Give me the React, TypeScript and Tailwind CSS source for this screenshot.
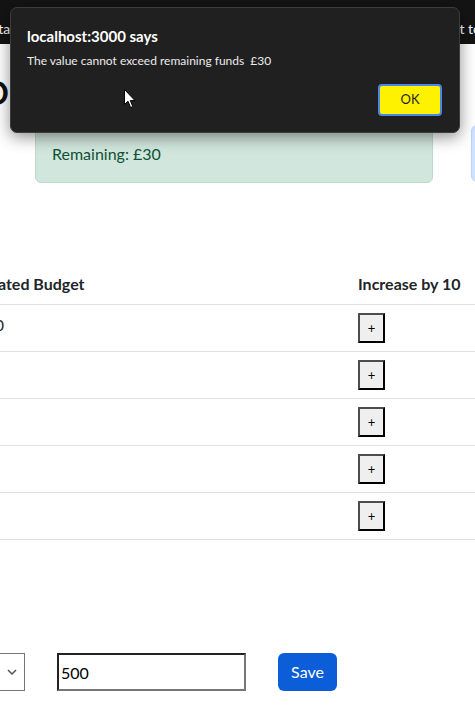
import React from 'react';

const rows = ['£500', '', '', '', ''];

function PlusButton() {
  return (
    <button className="w-[27px] h-[30px] bg-[#efefef] border-2 border-t-[#4d4d4d] border-l-[#4d4d4d] border-r-black border-b-black text-[13px] leading-none text-black flex items-center justify-center">
      +
    </button>
  );
}

function Cursor() {
  return (
    <svg width="13" height="20" viewBox="0 0 13 20" className="absolute left-[124px] top-[89px]">
      <path d="M0.5 0.5 L0.5 15.5 L4 12.2 L6.6 18.5 L8.8 17.6 L6.3 11.6 L11 11.6 Z" fill="white" stroke="black" strokeWidth="1" />
    </svg>
  );
}

export default function App() {
  return (
    <div className="relative w-[475px] h-[718px] overflow-hidden bg-white text-[#212529] font-['Lato','Noto_Sans',sans-serif]">
      {/* top bar */}
      <div className="h-[44px] pt-[12px] bg-[#141414] flex items-center justify-between text-white text-[14px] overflow-hidden whitespace-nowrap">
        <span className="ml-[-9px]">Sta</span>
        <span className="mr-[-6px]">t to</span>
      </div>

      <div className="ml-[-46px] w-[620px]">
        <div className="mt-[30px] h-[38px] flex items-center">
          <span className="ml-[29px] text-[32px] font-bold leading-none text-[#111]">O</span>
        </div>

        <div className="mt-[13px] flex gap-[38px]">
          <div className="shrink-0 ml-[81px] w-[398px] h-[58px] bg-[#d1e7dd] border border-[#badbcc] rounded-md px-4 flex items-center text-[#0f5132] text-[16px]">
            Remaining: £30
          </div>
          <div className="shrink-0 w-[200px] h-[57px] bg-[#cfe2ff] border border-[#b6d4fe] rounded-md" />
        </div>

        <div className="mt-[81px] text-[16px]">
          <div className="flex border-b border-[#dee2e6] font-bold">
            <div className="w-[396px] py-2 pl-[8px] leading-6 whitespace-nowrap">Allocated Budget</div>
            <div className="flex-1 py-2 pl-2 leading-6 whitespace-nowrap">Increase by 10</div>
          </div>
          {rows.map((r, i) => (
            <div key={i} className="flex border-b border-[#dee2e6]">
              <div className="w-[396px] py-2 pl-[13px] leading-6">{r}</div>
              <div className="flex-1 py-2 pl-2">
                <PlusButton />
              </div>
            </div>
          ))}
        </div>

        <div className="mt-[113px] flex items-center">
          <div className="w-[71px] h-[38px] border border-[#767676] bg-white flex items-center justify-end pr-[7px]">
            <svg width="10" height="6" viewBox="0 0 10 6">
              <path d="M1 1 L5 5 L9 1" fill="none" stroke="#555" strokeWidth="1.5" />
            </svg>
          </div>
          <input
            readOnly
            value="500"
            className="ml-[32px] w-[189px] h-[38px] border-2 border-t-[#222] border-l-[#222] border-r-[#767676] border-b-[#767676] px-[2px] text-[16px] text-black outline-none"
          />
          <button className="ml-[32px] w-[59px] h-[38px] rounded-md bg-[#0b5ed7] text-white text-[16px]">Save</button>
        </div>
      </div>

      {/* alert dialog */}
      <div className="absolute left-[10px] top-[7px] w-[450px] h-[126px] bg-[#202020] border border-[#3d3d3d] rounded-[7px] shadow-[0_4px_16px_rgba(0,0,0,0.45)] px-[16px] pt-[18px]">
        <div className="text-white font-bold text-[15px] leading-5">localhost:3000 says</div>
        <div className="mt-[7px] text-[#ececec] text-[12px] leading-4 whitespace-pre">The value cannot exceed remaining funds  £30</div>
        <div className="mt-[15px] flex justify-end pr-[1px]">
          <button className="w-[64px] h-[32px] bg-[#fff200] border-2 border-[#4a86e8] rounded-[4px] text-[13px] text-[#1e1e1e]">OK</button>
        </div>
      </div>

      <Cursor />
    </div>
  );
}
